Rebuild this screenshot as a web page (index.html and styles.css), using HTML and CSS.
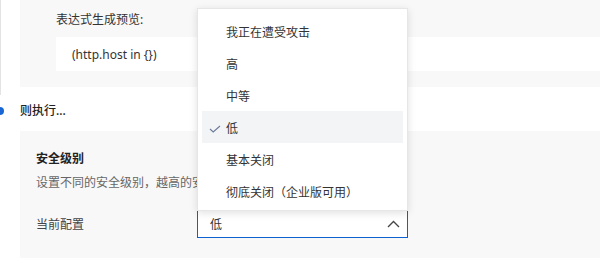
FILE: index.html
```html
<!DOCTYPE html>
<html lang="zh-CN">
<head>
<meta charset="utf-8">
<link rel="stylesheet" href="styles.css">
</head>
<body>
<div class="step step-done">
  <div class="card card-preview">
    <div class="preview-label">表达式生成预览:</div>
    <div class="preview-box">(http.host in {})</div>
  </div>
</div>
<div class="step-title">则执行...</div>
<div class="card card-action">
  <div class="action-title">安全级别</div>
  <div class="action-desc">设置不同的安全级别，越高的安全级别会对访问者进行更严格的检查。</div>
  <div class="config-row">
    <div class="config-label">当前配置</div>
    <div class="select">
      <ul class="menu">
        <li class="menu-item">我正在遭受攻击</li>
        <li class="menu-item">高</li>
        <li class="menu-item">中等</li>
        <li class="menu-item selected"><svg class="check" viewBox="0 0 12 8" width="12" height="8"><path d="M1 4 L4.2 7 L11 1" fill="none" stroke="#6b7a99" stroke-width="1.1"/></svg>低</li>
        <li class="menu-item">基本关闭</li>
        <li class="menu-item">彻底关闭（企业版可用）</li>
      </ul>
      <span class="select-value">低</span>
      <svg class="chevron" viewBox="0 0 13 8" width="13" height="8"><path d="M1 7 L6.5 1.5 L12 7" fill="none" stroke="#444" stroke-width="1.3"/></svg>
    </div>
  </div>
</div>
</body>
</html>
```
FILE: styles.css
```css
html, body {
  margin: 0;
  padding: 0;
  background: #ffffff;
  overflow: hidden;
}
body {
  width: 600px;
  height: 258px;
  font-family: "Noto Sans", "Noto Sans CJK SC", sans-serif;
  font-size: 12px;
  color: #333333;
}
.step {
  border-left: 1px solid #e3e3e3;
  padding: 0 0 8px 19px;
}
.card {
  background: #f8f8f8;
}
.card-preview {
  padding: 10px 0 16px 36px;
}
.preview-label {
  line-height: 20px;
  height: 20px;
  margin-bottom: 7px;
  color: #333;
}
.preview-box {
  background: #ffffff;
  box-sizing: border-box;
  height: 34px;
  line-height: 32px;
  padding: 2px 0 0 16px;
  color: #333;
}
.step-title {
  position: relative;
  margin-top: 6px;
  line-height: 20px;
  height: 20px;
  padding-left: 20px;
  font-weight: 500;
  color: #222;
}
.step-title::before {
  content: "";
  position: absolute;
  left: -4px;
  top: 6px;
  width: 8px;
  height: 8px;
  border-radius: 50%;
  background: #1a66d2;
}
.card-action {
  margin: 10px 0 0 20px;
  padding: 18px 0 30px 16px;
}
.action-title {
  line-height: 20px;
  font-weight: 700;
  color: #222;
}
.action-desc {
  margin-top: 4px;
  line-height: 20px;
  color: #666;
  white-space: nowrap;
}
.config-row {
  margin-top: 17px;
  display: flex;
  align-items: center;
}
.config-label {
  width: 161px;
  color: #444;
}
.select {
  position: relative;
  box-sizing: border-box;
  width: 211px;
  height: 28px;
  border: 1px solid #0b62d0;
  border-width: 1px 1.5px 1.5px 1.5px;
  background: #fff;
  display: flex;
  align-items: center;
  justify-content: space-between;
  padding: 0 7px 0 12px;
}
.select-value {
  color: #333;
}
.chevron {
  display: block;
}
.menu {
  position: absolute;
  left: -1px;
  right: -1px;
  bottom: 100%;
  margin: 0;
  padding: 6px 4px 3px 4px;
  list-style: none;
  background: #ffffff;
  border: 1px solid #e6e6e6;
  box-shadow: 0 2px 8px rgba(0, 0, 0, 0.12);
  z-index: 5;
}
.menu-item {
  position: relative;
  box-sizing: border-box;
  height: 32px;
  line-height: 28px;
  padding: 4px 0 0 24px;
  color: #333;
  white-space: nowrap;
}
.menu-item.selected {
  background: #f3f4f6;
}
.check {
  position: absolute;
  left: 7px;
  top: 14px;
}
```
